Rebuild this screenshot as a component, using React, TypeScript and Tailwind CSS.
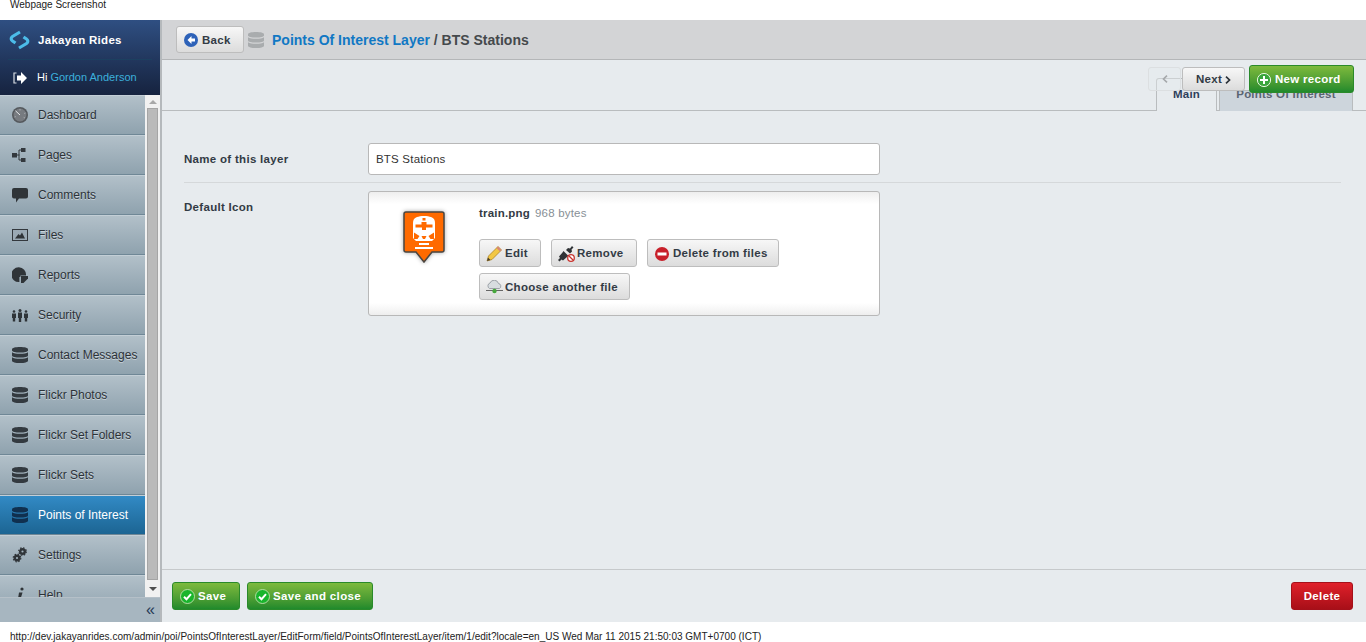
import React from 'react'

function DbIcon({ className = 'fill-[#333a40]' }: { className?: string }) {
  return (
    <svg width="16" height="16" viewBox="0 0 16 16" className={className}>
      <path d="M0 2.200C0 .9 3.600 0 8 0s8 .9 8 2.200v1.300C16 4.800 12.400 5.600 8 5.600S0 4.800 0 3.500z" />
      <path d="M0 5.200C1.500 6.300 4.500 6.700 8 6.700s6.500-.4 8-1.500v3.200c0 1.300-3.600 2.100-8 2.100S0 9.700 0 8.400z" />
      <path d="M0 10.200c1.500 1.100 4.500 1.500 8 1.500s6.500-.4 8-1.500v3.500C16 15.100 12.400 16 8 16S0 15.100 0 13.700z" />
    </svg>
  )
}

function Gauge() {
  return (
    <svg width="16" height="16" viewBox="0 0 16 16">
      <circle cx="8" cy="8" r="8" fill="#55595d" />
      <circle cx="8" cy="8" r="6.400" fill="#777b80" />
      <path d="M8 8 3.500 3.800" stroke="#e4e6e8" strokeWidth="1" />
      <path d="M8 2v1.500M13.500 6l-1.300.5M2.500 10l1.300-.4M13 11l-1.300-.6" stroke="#b5b8bb" strokeWidth=".8" />
    </svg>
  )
}

function Sitemap() {
  return (
    <svg width="14" height="14" viewBox="0 0 14 14" fill="#33383d">
      <rect x="0" y="5" width="5" height="4.500" />
      <rect x="9" y="0" width="4.500" height="4" />
      <rect x="9" y="10" width="4.500" height="4" />
      <path d="M5 7h2.500M7 2h2M7 12h2M7 2v10" stroke="#33383d" strokeWidth="1" fill="none" />
    </svg>
  )
}

function Comment() {
  return (
    <svg width="16" height="15" viewBox="0 0 16 15" fill="#2f3438">
      <path d="M2 0h12a2 2 0 0 1 2 2v6.500a2 2 0 0 1-2 2H7L4 14.500v-4H2a2 2 0 0 1-2-2V2a2 2 0 0 1 2-2z" />
    </svg>
  )
}

function Picture() {
  return (
    <svg width="16" height="12" viewBox="0 0 16 12">
      <rect x=".5" y=".5" width="15" height="11" fill="#9aa9b4" stroke="#33383d" />
      <path d="M3 9.500 6.500 5 8 6.500 10 3.500l3 6z" fill="#2f3438" />
    </svg>
  )
}

function Pie() {
  return (
    <svg width="16" height="16" viewBox="0 0 16 16" fill="#2f3438">
      <path d="M13.800 7.500H8.500V9h-1v4.800A7 7 0 1 1 13.800 7.500z" transform="translate(-.5 .5) scale(1.050)" />
      <path d="M9 9h7v2.500L11.500 16H9z" />
    </svg>
  )
}

function People() {
  return (
    <svg width="16" height="13" viewBox="0 0 16 13" fill="#2f3438">
      <circle cx="2" cy="2.500" r="1.300" />
      <circle cx="8" cy="1.500" r="1.500" />
      <circle cx="14" cy="2.500" r="1.300" />
      <path d="M0 4.500h4v4.500H3.200v3.500H.8V9H0zM6 3.500h4V9H9.200v4H6.800V9H6zM12 4.500h4v4.500h-.8v3.500h-2.400V9H12z" />
    </svg>
  )
}

function Gears() {
  return (
    <svg width="16" height="16" viewBox="0 0 16 16" fill="none" stroke="#2f3438">
      <circle cx="10.500" cy="4.500" r="2.300" strokeWidth="2.400" />
      <circle cx="10.500" cy="4.500" r="3.800" strokeWidth="1.200" strokeDasharray="1.500 1.500" />
      <circle cx="5" cy="11" r="2.300" strokeWidth="2.400" />
      <circle cx="5" cy="11" r="3.800" strokeWidth="1.200" strokeDasharray="1.500 1.500" />
    </svg>
  )
}

function HelpIcon() {
  return (
    <svg width="16" height="16" viewBox="0 0 16 16" fill="#2f3438">
      <circle cx="10" cy="2" r="1.600" />
      <path d="M7 5.500h3.500L8 13.500 5.500 15z" />
    </svg>
  )
}

function GreenCheck() {
  return (
    <svg width="15" height="15" viewBox="0 0 15 15">
      <circle cx="7.500" cy="7.500" r="7" fill="#19b52c" stroke="#cfe8bd" strokeWidth=".8" />
      <path d="M4 7.700 6.500 10.200l4.500-5" fill="none" stroke="#fff" strokeWidth="2" />
    </svg>
  )
}

function TrainPin() {
  return (
    <svg width="44" height="54" viewBox="0 0 44 54" className="drop-shadow-[0_0_2px_rgba(0,0,0,.35)]">
      <path d="M4 2h36a2 2 0 0 1 2 2v36a2 2 0 0 1-2 2H30l-8 10-8-10H4a2 2 0 0 1-2-2V4a2 2 0 0 1 2-2z" fill="#ff6a00" stroke="#4a4540" strokeWidth="1.500" />
      {/* train front */}
      <path d="M15 7c3-1.500 11-1.500 14 0 3 1 4 3 4 6v15l-3 3H14l-3-3V13c0-3 1-5 4-6z" fill="#fff" />
      <rect x="20.500" y="8" width="3" height="2.500" fill="#ff6a00" />
      <path d="M13.500 14.500h6V12h5v2.500h6v3h-6.500V20h-4v-2.500h-6.500z" fill="#ff6a00" />
      <path d="M12 22.500l5.500 3.500-2 3H12zM32 22.500 26.500 26l2 3H32zM19.500 26h5L23 29h-2z" fill="#ff6a00" />
      <path d="M17 34h10M13 38h18" stroke="#fff" strokeWidth="1.800" />
    </svg>
  )
}

const menu = [
  { label: 'Dashboard', icon: <Gauge /> },
  { label: 'Pages', icon: <Sitemap /> },
  { label: 'Comments', icon: <Comment /> },
  { label: 'Files', icon: <Picture /> },
  { label: 'Reports', icon: <Pie /> },
  { label: 'Security', icon: <People /> },
  { label: 'Contact Messages', icon: <DbIcon /> },
  { label: 'Flickr Photos', icon: <DbIcon /> },
  { label: 'Flickr Set Folders', icon: <DbIcon /> },
  { label: 'Flickr Sets', icon: <DbIcon /> },
  { label: 'Points of Interest', icon: <DbIcon className="fill-[#10304f]" />, active: true },
  { label: 'Settings', icon: <Gears /> },
  { label: 'Help', icon: <HelpIcon /> },
]

function Sidebar() {
  return (
    <aside className="flex w-[160px] shrink-0 flex-col">
      <div className="h-[75px] shrink-0 bg-gradient-to-b from-[#2f4f82] to-[#16233f] text-white">
        <div className="mx-2 flex h-[40px] items-center gap-[8px] border-b border-[#1c4060] pl-px">
          <svg width="21" height="20" viewBox="0 0 21 20" fill="none" stroke="#4cbce9" strokeWidth="3.200">
            <path d="M11 2 3.500 6.500c-2 1.500-1.500 3.500 0 4.500l3 2" />
            <path d="M10 18l7.500-4.500c2-1.500 1.500-3.500 0-4.500l-3-2" />
          </svg>
          <span className="pt-[2px] text-[11.5px] font-bold tracking-[.3px]">Jakayan Rides</span>
        </div>
        <div className="flex h-[35px] items-center pl-[13px] text-[11px]">
          <svg width="14" height="12" viewBox="0 0 14 12" className="mr-[10px]" fill="#fff">
            <path d="M8 0v3.500H4v5h4V12l6-6z" />
            <path d="M3.500 1H1v10h2.500" fill="none" stroke="#d6dbe2" strokeWidth="1.200" />
          </svg>
          <span>Hi</span>
          <span className="ml-[3px] text-[#3cb0dc]">Gordon Anderson</span>
        </div>
      </div>

      <div className="flex min-h-0 flex-1">
        <div className="min-w-0 flex-1 overflow-hidden">
          {menu.map((m) => (
            <div
              key={m.label}
              className={
                'flex h-[40px] items-center border-b border-t border-b-[#6f8796] border-t-[#c3ced6] pl-[12px] text-[12px] ' +
                (m.active
                  ? 'bg-gradient-to-b from-[#328ac5] to-[#1c6593] text-white border-t-[#328ac5] border-b-[#1c6593]'
                  : 'bg-gradient-to-b from-[#b2c0c9] to-[#8fa2ae] text-[#2c3238] [text-shadow:0_1px_0_rgba(255,255,255,.45)]')
              }
            >
              <span className="flex w-[26px] shrink-0 items-center">{m.icon}</span>
              <span className="whitespace-nowrap">{m.label}</span>
            </div>
          ))}
        </div>
        <div className="flex w-[15px] shrink-0 flex-col items-center bg-[#f1f1f1]">
          <div className="flex h-[13px] w-full items-center justify-center">
            <div className="h-0 w-0 border-x-[4px] border-b-[4px] border-x-transparent border-b-[#a8a8a8]" />
          </div>
          <div className="w-[11px] flex-1 border border-[#a5a5a5] bg-[#bababa]" />
          <div className="flex h-[17px] w-full items-center justify-center">
            <div className="h-0 w-0 border-x-[4px] border-t-[4px] border-x-transparent border-t-[#505050]" />
          </div>
        </div>
      </div>

      <div className="flex h-[25px] shrink-0 items-center justify-end border-t border-[#b5c0c8] bg-[#a7b6c0] pr-[5px] text-[16px] leading-none text-[#263a55]">
        «
      </div>
    </aside>
  )
}

const btn =
  'flex items-center whitespace-nowrap rounded-[3px] border border-[#bdbdbd] bg-gradient-to-b from-[#f7f7f7] to-[#dcdcdc] pt-px text-[11.5px] font-bold tracking-[.3px] text-[#333b45]'

const green =
  'flex h-[28px] items-center rounded-[3px] border border-[#2a8a2a] bg-gradient-to-b from-[#7dba3d] to-[#1f8a2c] pl-[7px] pt-px'

function Main() {
  return (
    <main className="flex min-w-0 flex-1 flex-col border-l-2 border-[#b5b9bc] bg-[#e7ebee] text-[#333b45]">
      <div className="flex h-[40px] shrink-0 items-center border-b border-[#b4b6b8] bg-[#d3d4d6] pl-[14px]">
        <div className={btn + ' h-[27px] w-[68px] pl-[7px]'}>
          <svg width="14" height="14" viewBox="0 0 14 14" className="mr-[4px]">
            <circle cx="7" cy="7" r="7" fill="#2e62b8" />
            <path d="M7.500 3 3.500 7l4 4V8.500h3.500v-3H7.500z" fill="#fff" />
          </svg>
          <span className="pt-px">Back</span>
        </div>
        <span className="ml-[4px] mr-[8px] mt-px">
          <DbIcon className="fill-[#a9acae]" />
        </span>
        <span className="pt-[2px] text-[14px] font-bold">
          <span className="text-[#1178c4]">Points Of Interest Layer</span>
          <span className="text-[#45494c]"> / BTS Stations</span>
        </span>
      </div>

      <div className="relative h-[51px] shrink-0 border-b border-[#b9bcbe]">
        <div className="absolute bottom-[-1px] right-[13px] flex items-end text-[11.5px] font-bold tracking-[.2px]">
          <div className="flex h-[33px] w-[61px] items-end justify-center rounded-t-[3px] border border-b-0 border-[#b9bcbe] bg-[#e7ebee] pb-[8px] text-[#2f3f5c]">
            Main
          </div>
          <div className="ml-[2px] flex h-[21px] w-[134px] items-end justify-center border border-b-0 border-[#b9bcbe] bg-[#cdd5dc] pb-[8px] text-[#5a6472]">
            Points Of Interest
          </div>
        </div>
        <div className="absolute right-[12px] top-[5px] flex items-center">
          <div className="mr-px flex h-[24px] w-[33px] items-center justify-center rounded-[3px] border border-[#dcdfe1] bg-[#e7ebee]/40">
            <svg width="6" height="8" viewBox="0 0 6 8" fill="none" stroke="#a5a8ab" strokeWidth="1.600">
              <path d="M5 .7 1.500 4 5 7.300" />
            </svg>
          </div>
          <div className={btn + ' mr-[4px] h-[24px] w-[63px] justify-center'}>
            Next
            <svg width="6" height="8" viewBox="0 0 6 8" fill="none" stroke="#2c3238" strokeWidth="1.700" className="ml-[3px]">
              <path d="M1 .7 4.500 4 1 7.300" />
            </svg>
          </div>
          <div className={green + ' w-[105px] text-[11.5px] font-bold tracking-[.3px] text-white'}>
            <svg width="14" height="14" viewBox="0 0 14 14" className="mr-[4px]">
              <circle cx="7" cy="7" r="6.600" fill="#3aa63c" stroke="#e8f5e0" />
              <path d="M7 3v8M3 7h8" stroke="#fff" strokeWidth="2" />
            </svg>
            New record
          </div>
        </div>
      </div>

      <div className="flex-1 pl-[22px] pr-[25px] pt-[32px]">
        <div className="flex items-center border-b border-[#d5d8da] pb-[7px]">
          <label className="w-[184px] pt-px text-[11.5px] font-bold tracking-[.3px]">Name of this layer</label>
          <div className="flex h-[32px] w-[512px] items-center rounded-[3px] border border-[#b8b8b8] bg-white pl-[7px] pt-px text-[11.5px] tracking-[.2px] text-[#333]">
            BTS Stations
          </div>
        </div>
        <div className="flex items-start pt-[8px]">
          <label className="w-[184px] pt-[8px] text-[11.5px] font-bold tracking-[.3px]">Default Icon</label>
          <div className="flex h-[125px] w-[512px] rounded-[3px] border border-[#b8b8b8] bg-[linear-gradient(#eeeeee,#ffffff_12px,#ffffff_calc(100%-12px),#eeeeee)] pl-[33px] pt-[14px]">
            <div className="w-[77px] shrink-0 pt-[4px]">
              <TrainPin />
            </div>
            <div className="flex-1">
              <div className="text-[11.5px] leading-[14px] tracking-[.2px]">
                <b>train.png</b>
                <span className="ml-[5px] text-[#888f96]">968 bytes</span>
              </div>
              <div className="mt-[19px] flex gap-[10px]">
                <div className={btn + ' h-[28px] w-[62px] pl-[6px]'}>
                  <svg width="17" height="17" viewBox="0 0 17 17" className="mr-[2px]">
                    <path d="M1 16 2.500 11 12 1.500 15.500 5 6 14.500z" fill="#f2c744" stroke="#a57a1a" strokeWidth=".7" />
                    <path d="M12 1.500 15.500 5 14 6.500 10.500 3z" fill="#d6867a" />
                    <path d="M1 16l1-3.500L4.500 15z" fill="#4a4030" />
                  </svg>
                  Edit
                </div>
                <div className={btn + ' h-[28px] w-[86px] pl-[6px]'}>
                  <svg width="17" height="17" viewBox="0 0 17 17" className="mr-[2px]">
                    <path d="M0 15l2-2-1-1.500 3.500-4 1-1.500 5 5-1.500 1-4 3.500L3.500 14.500 1.500 16.500z" fill="#2f3235" />
                    <path d="M8 5l2-2 2 .5L14 1l1.500 1.500L13.500 4.500l.5 2-2 2z" fill="#2f3235" />
                    <circle cx="13" cy="13" r="3.300" fill="#fff" stroke="#c8332e" strokeWidth="1.300" />
                    <path d="M11 11l4 4" stroke="#c8332e" strokeWidth="1.200" />
                  </svg>
                  Remove
                </div>
                <div className={btn + ' h-[28px] w-[132px] pl-[7px]'}>
                  <svg width="14" height="14" viewBox="0 0 14 14" className="mr-[4px]">
                    <circle cx="7" cy="7" r="7" fill="#c8202a" />
                    <rect x="2.500" y="5.500" width="9" height="3" fill="#fff" />
                  </svg>
                  Delete from files
                </div>
              </div>
              <div className={btn + ' mt-[6px] h-[27px] w-[151px] pl-[6px]'}>
                <svg width="17" height="14" viewBox="0 0 17 14" className="mr-[2px]">
                  <path d="M3.500 8.500a3 3 0 0 1 .5-5.500 4.500 4.500 0 0 1 8.500.5 2.700 2.700 0 0 1 1 5z" fill="#d8dde0" stroke="#8b9299" strokeWidth=".8" />
                  <path d="M0 10.500h17" stroke="#666" strokeWidth="1" />
                  <circle cx="8.500" cy="11" r="2.200" fill="#46a83c" />
                </svg>
                <span className="pt-px">Choose another file</span>
              </div>
            </div>
          </div>
        </div>
      </div>

      <div className="flex h-[53px] shrink-0 items-start justify-between border-t border-[#c6c9cb] bg-[#e7ebee] pl-[10px] pr-[13px] pt-[12px] text-[11.5px] font-bold tracking-[.35px] text-white">
        <div className="flex gap-[7px]">
          <div className={green + ' w-[68px]'}>
            <span className="mr-[3px]"><GreenCheck /></span>Save
          </div>
          <div className={green + ' w-[126px]'}>
            <span className="mr-[3px]"><GreenCheck /></span>Save and close
          </div>
        </div>
        <div className="flex h-[28px] w-[62px] items-center justify-center rounded-[3px] border border-[#a5101a] bg-gradient-to-b from-[#e0202a] to-[#a80f18] pt-px">
          Delete
        </div>
      </div>
    </main>
  )
}

export default function App() {
  return (
    <div className="flex h-[642px] flex-col overflow-hidden bg-white font-['Liberation_Sans',sans-serif]">
      <div className="h-[20px] shrink-0 pl-[10px] text-[10px] leading-[10px] text-[#222]">Webpage Screenshot</div>
      <div className="flex min-h-0 flex-1">
        <Sidebar />
        <Main />
      </div>
      <div className="h-[20px] shrink-0 pl-[10px] pt-[9px] text-[10px] leading-[12px] tracking-[.013px] text-[#222]">
        http://dev.jakayanrides.com/admin/poi/PointsOfInterestLayer/EditForm/field/PointsOfInterestLayer/item/1/edit?locale=en_US Wed Mar 11 2015 21:50:03 GMT+0700 (ICT)
      </div>
    </div>
  )
}
